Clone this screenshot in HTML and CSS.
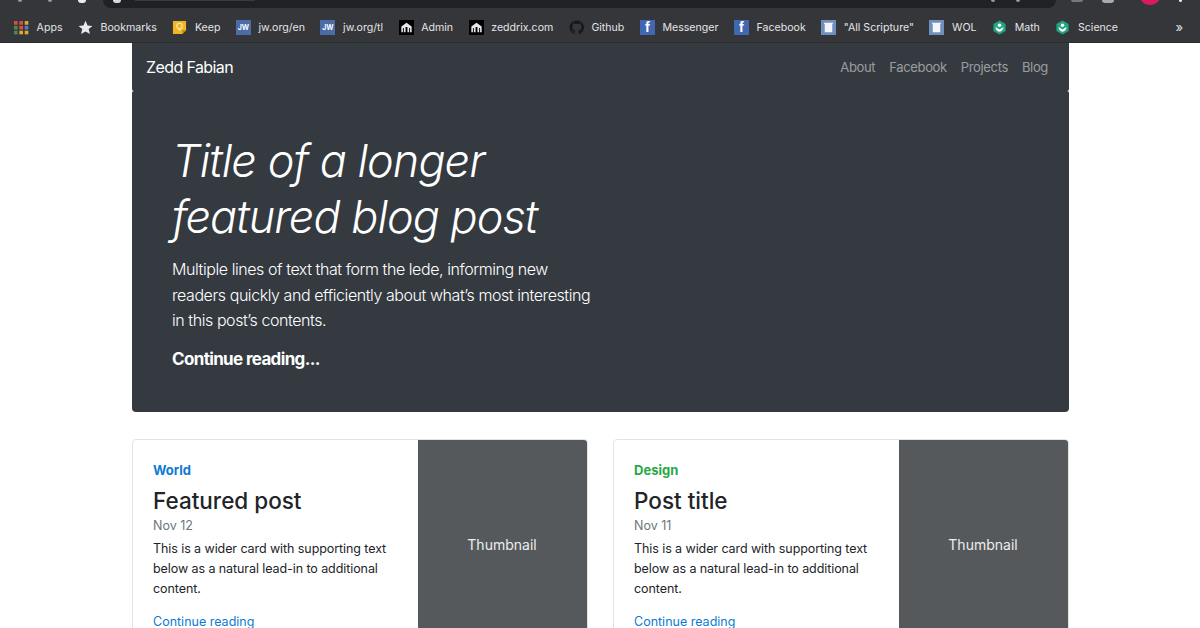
FILE: index.html
```html
<!doctype html>
<html>
	<head>
		<meta charset="utf-8">
		<title>Zedd Fabian</title>
		<link rel="stylesheet" href="styles.css">
	</head>
	<body>
		<div class="chrome">
			<div class="tabstrip">
				<div class="tools">
					<i class="tick"></i>
					<i class="tick"></i>
					<i class="tick bright"></i>
				</div>
				<div class="omnibox">
					<i class="site"></i>
					<i class="url"></i>
					<i class="tick star-a"></i>
					<i class="tick star-b"></i>
				</div>
				<i class="ext ext-a"></i>
				<i class="ext ext-b"></i>
				<div class="avatar"></div>
				<i class="tick menu"></i>
			</div>
			<div class="bookmarks">
				<a class="mark">
					<svg class="ico" viewBox="0 0 14 14"><g>
						<rect x="0" y="1" width="3.4" height="3.4" fill="#d9503f"/><rect x="5" y="1" width="3.4" height="3.4" fill="#d9503f"/><rect x="10" y="1" width="3.4" height="3.4" fill="#e0a92f"/>
						<rect x="0" y="5.5" width="3.4" height="3.4" fill="#4a8a50"/><rect x="5" y="5.5" width="3.4" height="3.4" fill="#d9503f"/><rect x="10" y="5.5" width="3.4" height="3.4" fill="#4d7cc7"/>
						<rect x="0" y="10" width="3.4" height="3.4" fill="#4a8a50"/><rect x="5" y="10" width="3.4" height="3.4" fill="#e0a92f"/><rect x="10" y="10" width="3.4" height="3.4" fill="#e0a92f"/>
					</g></svg>
					<span>Apps</span>
				</a>
				<a class="mark">
					<svg class="ico" viewBox="0 0 14 14"><path d="M7 .8l1.9 4.3 4.6.4-3.5 3 1.1 4.6L7 10.7l-4.1 2.4L4 8.5.5 5.5l4.6-.4z" fill="#e8eaed"/></svg>
					<span>Bookmarks</span>
				</a>
				<a class="mark">
					<svg class="ico" viewBox="0 0 16 16"><path d="M1 1h14v10l-4 4H1z" fill="#f0b429"/><path d="M11 15v-4h4z" fill="#b98416"/><circle cx="8" cy="6.5" r="3" fill="none" stroke="#fbe6a8" stroke-width="1.2"/><path d="M6.8 10.5h2.4" stroke="#fbe6a8" stroke-width="1.2"/></svg>
					<span>Keep</span>
				</a>
				<a class="mark">
					<span class="ico tile jw">JW</span>
					<span>jw.org/en</span>
				</a>
				<a class="mark">
					<span class="ico tile jw">JW</span>
					<span>jw.org/tl</span>
				</a>
				<a class="mark">
					<svg class="ico" viewBox="0 0 16 16"><rect width="16" height="16" fill="#000"/><path d="M2.500 13V7L8 3l5.500 4v6h-1.700V8.500h-1V13H9V7.500H7V13H5.200V8.500h-1V13z" fill="#e8e8e8"/></svg>
					<span>Admin</span>
				</a>
				<a class="mark">
					<svg class="ico" viewBox="0 0 16 16"><rect width="16" height="16" fill="#000"/><path d="M2.500 13V7L8 3l5.500 4v6h-1.700V8.500h-1V13H9V7.500H7V13H5.200V8.500h-1V13z" fill="#e8e8e8"/></svg>
					<span>zeddrix.com</span>
				</a>
				<a class="mark">
					<svg class="ico" viewBox="0 0 16 16"><path d="M8 .5a7.500 7.500 0 0 0-2.400 14.600c.4.100.5-.2.500-.4v-1.300c-2.100.5-2.500-1-2.500-1-.3-.9-.8-1.100-.8-1.100-.7-.5.100-.5.100-.5.800.1 1.200.8 1.200.8.700 1.200 1.800.8 2.300.6.100-.5.300-.8.500-1-1.700-.2-3.400-.8-3.400-3.700 0-.8.300-1.500.8-2-.1-.2-.3-1 .1-2 0 0 .6-.2 2.100.8a7 7 0 0 1 3.800 0c1.400-1 2.100-.8 2.100-.8.400 1 .1 1.800.1 2 .5.500.8 1.200.8 2 0 2.900-1.800 3.500-3.400 3.700.3.200.5.700.5 1.400v2.100c0 .2.100.5.500.4A7.500 7.500 0 0 0 8 .5z" fill="#17181a"/></svg>
					<span>Github</span>
				</a>
				<a class="mark">
					<span class="ico tile fb">f</span>
					<span>Messenger</span>
				</a>
				<a class="mark">
					<span class="ico tile fb">f</span>
					<span>Facebook</span>
				</a>
				<a class="mark">
					<svg class="ico" viewBox="0 0 16 16"><rect width="16" height="16" fill="#6f8fbd"/><path d="M3 3h10l-1 2v8H4V5z" fill="#f2f5fa"/></svg>
					<span>"All Scripture"</span>
				</a>
				<a class="mark">
					<svg class="ico" viewBox="0 0 16 16"><rect width="16" height="16" fill="#6f8fbd"/><path d="M3 3h10l-1 2v8H4V5z" fill="#f2f5fa"/></svg>
					<span>WOL</span>
				</a>
				<a class="mark">
					<svg class="ico" viewBox="0 0 16 16"><path d="M8 .5l6.500 3.700v7.600L8 15.500l-6.500-3.700V4.200z" fill="#1fa584"/><circle cx="8" cy="5.500" r="1.900" fill="#fff"/><path d="M3.800 7.500L8 10l4.200-2.500c0 2.800-1.800 4.500-4.200 5-2.400-.5-4.200-2.200-4.200-5z" fill="#fff"/></svg>
					<span>Math</span>
				</a>
				<a class="mark">
					<svg class="ico" viewBox="0 0 16 16"><path d="M8 .5l6.500 3.700v7.600L8 15.500l-6.500-3.700V4.200z" fill="#1fa584"/><circle cx="8" cy="5.500" r="1.900" fill="#fff"/><path d="M3.800 7.500L8 10l4.200-2.500c0 2.800-1.800 4.500-4.200 5-2.400-.5-4.200-2.200-4.200-5z" fill="#fff"/></svg>
					<span>Science</span>
				</a>
				<span class="more">»</span>
			</div>
		</div>
		<div class="container">
			<nav class="navbar">
				<span class="brand">Zedd Fabian</span>
				<div class="navlinks">
					<a>About</a>
					<a>Facebook</a>
					<a>Projects</a>
					<a>Blog</a>
				</div>
			</nav>
			<header class="hero">
				<h1>Title of a longer featured blog post</h1>
				<p class="lede">Multiple lines of text that form the lede, informing new readers quickly and efficiently about what’s most interesting in this post’s contents.</p>
				<p class="more-link">Continue reading...</p>
			</header>
			<div class="cards">
				<article class="card">
					<div class="card-body">
						<strong class="cat world">World</strong>
						<h3>Featured post</h3>
						<div class="date">Nov 12</div>
						<p>This is a wider card with supporting text below as a natural lead-in to additional content.</p>
						<a class="read">Continue reading</a>
					</div>
					<div class="thumb">Thumbnail</div>
				</article>
				<article class="card">
					<div class="card-body">
						<strong class="cat design">Design</strong>
						<h3>Post title</h3>
						<div class="date">Nov 11</div>
						<p>This is a wider card with supporting text below as a natural lead-in to additional content.</p>
						<a class="read">Continue reading</a>
					</div>
					<div class="thumb">Thumbnail</div>
				</article>
			</div>
		</div>
	</body>
</html>
```

FILE: styles.css
```css
html, body {
	height: 628px;
	overflow: hidden;
}
body {
	margin: 0;
	background: #fff;
	font-family: Inter, "Liberation Sans", sans-serif;
	color: #212529;
}
.chrome {
	background: #35363a;
	height: 43px;
	border-bottom: 1px solid #2b2c2f;
	box-sizing: border-box;
}
.tabstrip {
	height: 8px;
	display: flex;
	overflow: hidden;
}
.tools {
	flex: 0 0 103px;
	display: flex;
	gap: 26px;
	padding-left: 18px;
	box-sizing: border-box;
}
.tick {
	display: block;
	width: 4px;
	height: 2px;
	background: #9a9b9e;
	border-radius: 0 0 2px 2px;
}
.bright {
	width: 8px;
	height: 3px;
	background: #e8eaed;
	border-radius: 0 0 4px 4px;
}
.omnibox {
	flex: 0 0 953px;
	height: 8px;
	background: #202124;
	border-radius: 0 0 14px 14px;
	display: flex;
	padding-left: 10px;
	box-sizing: border-box;
}
.site {
	width: 8px;
	height: 3px;
	background: #d8d9db;
	border-radius: 0 0 4px 4px;
}
.url {
	width: 120px;
	height: 1px;
	margin-left: 14px;
	background: #3a3b3f;
}
.star-a {
	margin-left: 736px;
}
.star-b {
	margin-left: 21px;
}
.ext {
	width: 12px;
	height: 3px;
	background: #77787b;
	border-radius: 0 0 3px 3px;
}
.ext-a {
	margin-left: 15px;
	height: 2px;
}
.ext-b {
	margin-left: 19px;
	background: #a9aaac;
}
.avatar {
	width: 22px;
	height: 22px;
	margin: -17px 0 0 25px;
	border-radius: 50%;
	background: #d81b60;
}
.menu {
	margin-left: 18px;
	width: 3px;
	background: #e8eaed;
}
.bookmarks {
	height: 34px;
	box-sizing: border-box;
	padding: 4px 17px 0 14px;
	display: flex;
	align-items: center;
	gap: 15.500px;
	color: #e3e4e6;
	font-size: 10.600px;
	white-space: nowrap;
}
.mark {
	display: flex;
	align-items: center;
	gap: 7.600px;
}
.ico {
	width: 15px;
	height: 15px;
	flex: none;
}
.tile {
	display: flex;
	align-items: center;
	justify-content: center;
	color: #fff;
	font-weight: 700;
}
.jw {
	background: #4a6da7;
	font-size: 7px;
}
.fb {
	background: #4267b2;
	font-size: 14px;
	align-items: flex-end;
	font-family: "Liberation Sans", sans-serif;
}
.more {
	margin-left: auto;
	font-size: 13px;
}
.container {
	width: 937px;
	margin-left: 132px;
}
.navbar {
	height: 48px;
	background: #343a40;
	border-radius: 0 0 2px 2px;
	display: flex;
	align-items: center;
	justify-content: space-between;
	padding: 0 21px 0 14px;
}
.brand {
	color: #fff;
	font-size: 16px;
	letter-spacing: -.6px;
}
.navlinks {
	display: flex;
	gap: 14px;
	font-size: 13px;
	letter-spacing: -.35px;
	color: rgba(255, 255, 255, .5);
}
.hero {
	height: 321px;
	box-sizing: border-box;
	background: #343a40;
	color: #fff;
	border-radius: 2px 2px 4px 4px;
	padding: 42px 40px 0;
}
.hero h1 {
	margin: 0 0 12px;
	width: 440px;
	font-size: 45px;
	line-height: 56px;
	font-weight: 300;
	font-style: italic;
	letter-spacing: -.95px;
}
.lede {
	margin: 0 0 13px;
	width: 430px;
	font-size: 16px;
	line-height: 25.500px;
	font-weight: 300;
	letter-spacing: -.43px;
}
.more-link {
	margin: 0;
	font-size: 17px;
	line-height: 25.500px;
	font-weight: 700;
	letter-spacing: -.65px;
}
.cards {
	display: flex;
	gap: 25.500px;
	margin-top: 27px;
}
.card {
	flex: 0 0 455.500px;
	height: 260px;
	box-sizing: border-box;
	display: flex;
	border: 1px solid #e2e3e5;
	border-radius: 4px;
	overflow: hidden;
}
.card-body {
	flex: 1;
	padding: 20px 20px 0;
}
.cat {
	display: block;
	font-size: 13px;
	line-height: 20px;
	font-weight: 700;
}
.world {
	color: #0d7ad4;
}
.design {
	color: #28a745;
}
.card h3 {
	margin: 7px 0 0;
	font-size: 22.500px;
	line-height: 28px;
	font-weight: 500;
}
.date {
	color: #6c757d;
	font-size: 12.500px;
	line-height: 20px;
	margin-top: 1px;
}
.card p {
	margin: 3px 0 11px;
	font-size: 12.500px;
	line-height: 20px;
	letter-spacing: -.08px;
}
.read {
	color: #0d7ad4;
	font-size: 12.500px;
	line-height: 20px;
}
.thumb {
	flex: 0 0 169px;
	background: #55595c;
	color: #eceeef;
	font-size: 14px;
	display: flex;
	justify-content: center;
	padding-top: 96px;
	box-sizing: border-box;
}
```
